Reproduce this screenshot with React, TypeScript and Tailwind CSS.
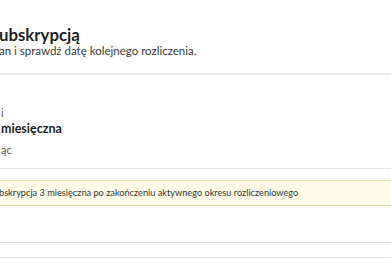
export default function App() {
  return (
    <div className="w-[391px] h-[260px] overflow-hidden bg-white font-['Lato','Noto_Sans',sans-serif] text-[#222]">
      <div className="-ml-[1px]">
        <header className="pt-[26px]">
          <h1 className="text-[16.8px] leading-[18px] font-bold text-[#1f1f1f] whitespace-nowrap">
            ubskrypcją
          </h1>
          <p className="text-[11.5px] leading-[14px] text-[#3a3a3a] whitespace-nowrap">
            an i sprawdź datę kolejnego rozliczenia.
          </p>
        </header>

        <section className="mt-[16px] w-[420px] border-y border-[#e3e3e3] shadow-[0_-1px_0_#f0f0f0] bg-white">
          <div className="pt-[31px] pb-[11px] pl-[2px]">
            <div className="text-[11px] leading-[13px] text-[#555]">i</div>
            <div className="mt-[2px] text-[12.5px] leading-[16px] font-bold text-[#1f1f1f] whitespace-nowrap">
              miesięczna
            </div>
            <div className="mt-[6px] text-[11px] leading-[14px] text-[#555]">ąc</div>
          </div>
          <div className="border-t border-[#e3e3e3] pt-[11px] pb-[36px]">
            <div className="h-[26px] flex items-center border-y border-[#e4e09a] bg-[#fffde9] text-[9.2px] text-[#333] whitespace-nowrap">
              bskrypcja 3 miesięczna po zakończeniu aktywnego okresu rozliczeniowego
            </div>
          </div>
        </section>

        <div className="mt-[14px] h-[10px] border-t border-[#e3e3e3]" />
      </div>
    </div>
  )
}
